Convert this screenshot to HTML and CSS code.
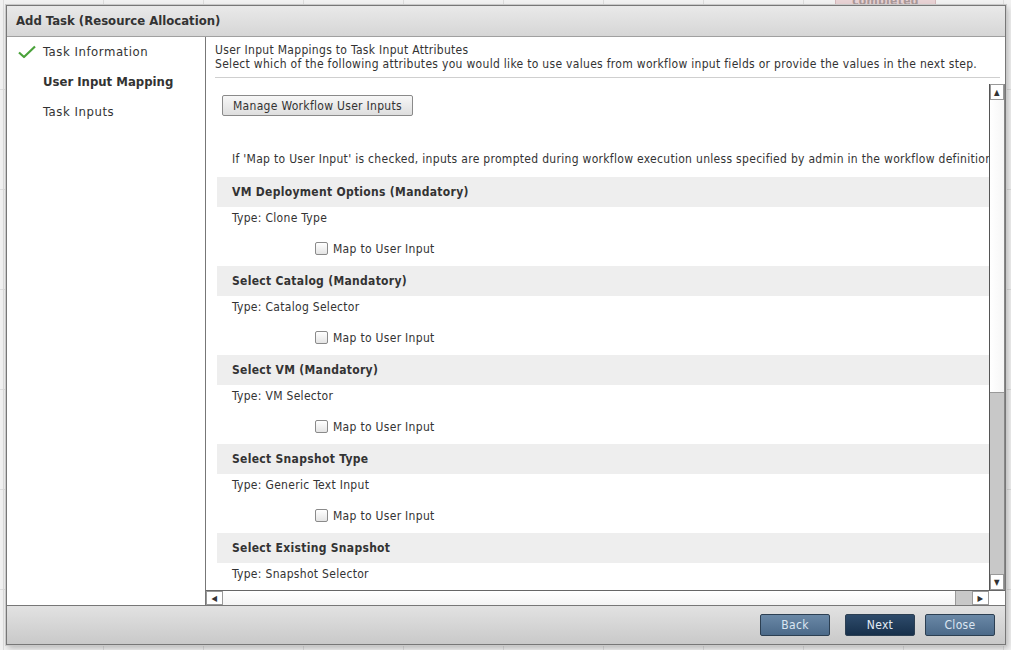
FILE: index.html
```html
<!DOCTYPE html>
<html lang="en">
<head>
    <meta charset="UTF-8">
    <title>Add Task (Resource Allocation)</title>
    <link rel="stylesheet" href="styles.css">
</head>
<body>
    <div class="behind-badge">completed</div>

    <div class="task-dialog">
        <div class="task-dialog-title">Add Task (Resource Allocation)</div>

        <div class="task-dialog-body">
            <ul class="wizard-steps">
                <li class="wizard-step done">
                    <svg class="step-check" width="18" height="14" viewBox="0 0 18 14">
                        <path d="M1 7.5 L6 12 L17 1.5" fill="none" stroke="#4aa23a" stroke-width="2.2" stroke-linejoin="round"/>
                    </svg>
                    Task Information
                </li>
                <li class="wizard-step current">User Input Mapping</li>
                <li class="wizard-step">Task Inputs</li>
            </ul>

            <div class="wizard-panel">
                <div class="wizard-intro">
                    <div>User Input Mappings to Task Input Attributes</div>
                    <div>Select which of the following attributes you would like to use values from workflow input fields or provide the values in the next step.</div>
                </div>

                <div class="scroll-box">
                    <div class="scroll-content">
                        <button class="plain-button">Manage Workflow User Inputs</button>
                        <p class="mapping-note">If 'Map to User Input' is checked, inputs are prompted during workflow execution unless specified by admin in the workflow definition.</p>

                        <div class="attr-head">VM Deployment Options (Mandatory)</div>
                        <div class="attr-type">Type: Clone Type</div>
                        <label class="attr-map"><span class="fake-check"></span>Map to User Input</label>

                        <div class="attr-head">Select Catalog (Mandatory)</div>
                        <div class="attr-type">Type: Catalog Selector</div>
                        <label class="attr-map"><span class="fake-check"></span>Map to User Input</label>

                        <div class="attr-head">Select VM (Mandatory)</div>
                        <div class="attr-type">Type: VM Selector</div>
                        <label class="attr-map"><span class="fake-check"></span>Map to User Input</label>

                        <div class="attr-head">Select Snapshot Type</div>
                        <div class="attr-type">Type: Generic Text Input</div>
                        <label class="attr-map"><span class="fake-check"></span>Map to User Input</label>

                        <div class="attr-head">Select Existing Snapshot</div>
                        <div class="attr-type">Type: Snapshot Selector</div>
                        <label class="attr-map"><span class="fake-check"></span>Map to User Input</label>
                    </div>

                    <div class="vscroll">
                        <div class="sb-arrow">&#9650;</div>
                        <div class="vscroll-thumb"></div>
                        <div class="vscroll-track"></div>
                        <div class="sb-arrow">&#9660;</div>
                    </div>

                    <div class="hscroll">
                        <div class="sb-arrow">&#9664;</div>
                        <div class="hscroll-thumb"></div>
                        <div class="hscroll-track"></div>
                        <div class="sb-arrow">&#9654;</div>
                    </div>
                    <div class="scroll-corner"></div>
                </div>
            </div>
        </div>

        <div class="task-dialog-footer">
            <button class="dlg-button">Back</button>
            <button class="dlg-button primary">Next</button>
            <button class="dlg-button">Close</button>
        </div>
    </div>
</body>
</html>
```
FILE: styles.css
```css
body {
    margin: 0;
    height: 650px;
    overflow: hidden;
    font-family: 'DejaVu Sans Condensed', 'DejaVu Sans', sans-serif;
    font-size: 12px;
    letter-spacing: 0.3px;
    color: #333;
    background-color: #f1f1f1;
    background-image:
        linear-gradient(to right, #dcdcdc 1px, transparent 1px),
        linear-gradient(to bottom, #dcdcdc 1px, transparent 1px);
    background-size: 100px 100px;
    background-position: 3px -11px;
    position: relative;
}

.behind-badge {
    position: absolute;
    left: 835px;
    top: -9px;
    width: 99px;
    height: 20px;
    background-color: #e8d2d4;
    border: 1px solid #d4b8ba;
    color: #a99;
    font-weight: bold;
    text-align: center;
    line-height: 18px;
}

.task-dialog {
    position: relative;
    margin: 5px 0 0 6px;
    width: 998px;
    height: 638px;
    border: 1px solid #777;
    outline: 1px solid #c9c9c9;
    box-shadow: 2px 3px 6px rgba(0, 0, 0, 0.25);
    display: flex;
    flex-direction: column;
    background-color: #fff;
}

.task-dialog-title {
    height: 30px;
    line-height: 30px;
    padding-left: 9px;
    font-weight: bold;
    font-size: 13px;
    letter-spacing: 0;
    color: #333;
    background: linear-gradient(#e9e9e9, #d6d6d6);
    border-bottom: 1px solid #a0a0a0;
}

.task-dialog-body {
    flex: 1;
    display: flex;
    min-height: 0;
}

.wizard-steps {
    list-style: none;
    margin: 0;
    padding: 0;
    width: 198px;
    border-right: 1px solid #777;
    font-size: 13px;
}

.wizard-step {
    height: 30px;
    line-height: 30px;
    padding-left: 36px;
    position: relative;
    letter-spacing: 0.55px;
}

.wizard-step.current {
    font-weight: bold;
    letter-spacing: 0;
}

.step-check {
    position: absolute;
    left: 11px;
    top: 8px;
}

.wizard-panel {
    flex: 1;
    display: flex;
    flex-direction: column;
    min-width: 0;
}

.wizard-intro {
    margin: 6px 5px 0 9px;
    padding-bottom: 6px;
    line-height: 14px;
    border-bottom: 1px solid #cfcfcf;
}

.scroll-box {
    flex: 1;
    margin-top: 6px;
    min-height: 0;
    display: grid;
    grid-template-columns: 1fr 16px;
    grid-template-rows: 1fr 15px;
}

.scroll-content {
    overflow: hidden;
    white-space: nowrap;
    padding-left: 11px;
}

.plain-button {
    margin: 11px 0 0 5px;
    height: 21px;
    padding: 0 10px;
    font-family: inherit;
    font-size: 12px;
    letter-spacing: 0.3px;
    color: #333;
    border: 1px solid #8a8a8a;
    border-radius: 2px;
    background: linear-gradient(#f7f7f7, #dedede);
}

.mapping-note {
    margin: 36px 0 10px 15px;
    line-height: 15px;
}

.attr-head {
    height: 30px;
    line-height: 30px;
    padding-left: 15px;
    background-color: #eeeeee;
    font-weight: bold;
}

.attr-type {
    height: 25px;
    line-height: 22px;
    padding-left: 15px;
}

.attr-map {
    height: 34px;
    padding-left: 98px;
    display: flex;
    align-items: center;
    padding-bottom: 1px;
    box-sizing: border-box;
}

.fake-check {
    width: 11px;
    height: 11px;
    margin-right: 5px;
    border: 1px solid #8a8a8a;
    border-radius: 2px;
    background: linear-gradient(#fff, #e4e4e4);
}

.vscroll {
    grid-row: 1;
    grid-column: 2;
    display: flex;
    flex-direction: column;
    border-left: 1px solid #555;
    border-right: 1px solid #888;
    background-color: #c8c8c8;
}

.hscroll {
    grid-row: 2;
    grid-column: 1;
    display: flex;
    border-top: 1px solid #666;
    background-color: #c8c8c8;
}

.sb-arrow {
    flex: none;
    width: 15px;
    height: 16px;
    font-size: 8px;
    line-height: 16px;
    text-align: center;
    color: #333;
    background-color: #fff;
    border: 1px solid #999;
    box-sizing: border-box;
}

.vscroll .sb-arrow {
    width: 100%;
}

.hscroll .sb-arrow {
    height: 100%;
    width: 17px;
    line-height: 13px;
}

.vscroll-thumb {
    height: 292px;
    background: linear-gradient(to right, #fff, #f6f6f6);
    border-bottom: 1px solid #999;
}

.vscroll-track {
    flex: 1;
}

.hscroll-thumb {
    flex: 1;
    background: linear-gradient(#fff, #f4f4f4);
    border-right: 1px solid #999;
}

.hscroll-track {
    width: 16px;
}

.scroll-corner {
    grid-row: 2;
    grid-column: 2;
    background-color: #fff;
    border-top: 1px solid #666;
}

.task-dialog-footer {
    height: 38px;
    border-top: 1px solid #777;
    background: linear-gradient(#e2e2e2, #c9c9c9);
    display: flex;
    justify-content: flex-end;
    align-items: center;
    padding-right: 10px;
}

.dlg-button {
    width: 70px;
    height: 22px;
    margin-left: 15px;
    font-family: inherit;
    font-size: 12px;
    letter-spacing: 0.3px;
    color: #dbe6f2;
    border: 1px solid #2c3f52;
    border-radius: 2px;
    background: linear-gradient(#6a88a6, #4c6a89);
    cursor: pointer;
}

.dlg-button.primary {
    background: linear-gradient(#2e4b6b, #17304b);
    color: #e2ebf5;
}

.dlg-button.primary + .dlg-button {
    margin-left: 10px;
}
```
